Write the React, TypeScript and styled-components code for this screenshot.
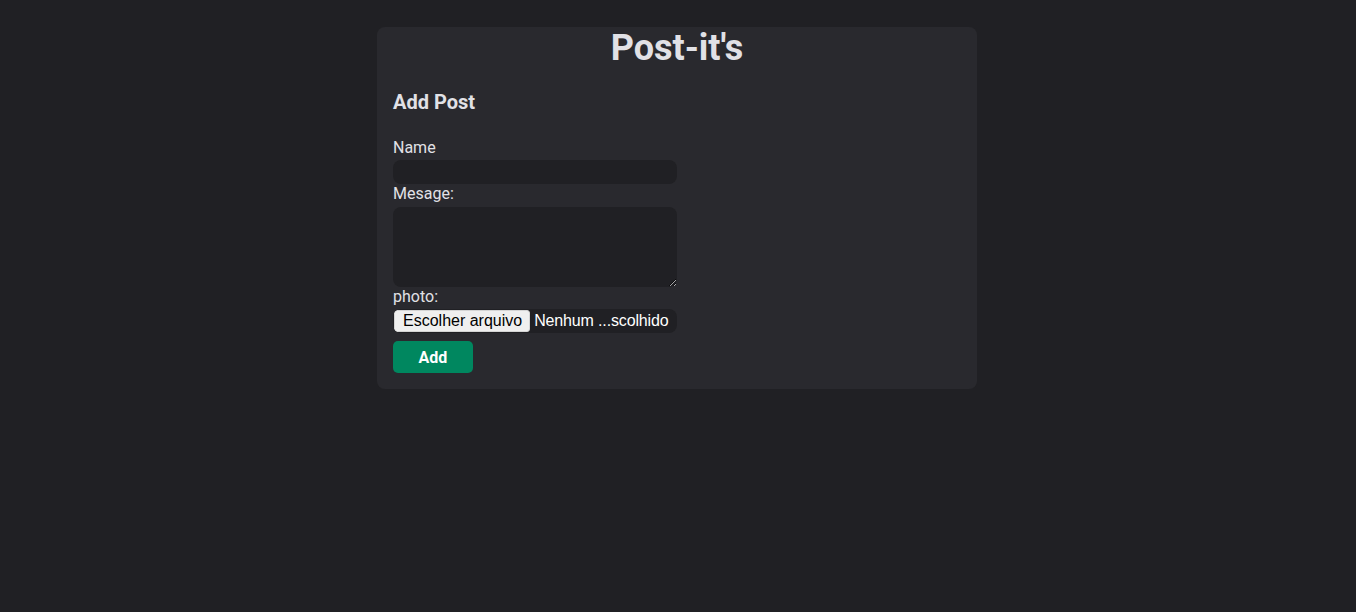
import React from "react";
import styled, { createGlobalStyle } from "styled-components";

const GlobalStyle = createGlobalStyle`
  html, body {
    margin: 0;
    padding: 0;
    background: #202024;
    min-height: 100%;
  }
  body {
    font-family: Roboto, "Liberation Sans", Arial, sans-serif;
    color: #e1e1e6;
  }
  * { box-sizing: border-box; }
`;

const Page = styled.main`
  min-height: 100vh;
  display: flex;
  justify-content: center;
  align-items: flex-start;
  padding: 27px 2px 0 0;
`;

const Card = styled.section`
  width: 600px;
  background: #29292e;
  border-radius: 8px;
  padding: 0 16px 16px;
`;

const Title = styled.h1`
  margin: 0;
  font-size: 36px;
  line-height: 42px;
  font-weight: 700;
  text-align: center;
  color: #e1e1e6;
`;

const SectionTitle = styled.h2`
  margin: 21px 0 23.5px;
  font-size: 20px;
  line-height: 24px;
  font-weight: 700;
  color: #e1e1e6;
`;

const Form = styled.form`
  display: flex;
  flex-direction: column;
  align-items: flex-start;
`;

const Field = styled.div`
  display: flex;
  flex-direction: column;
  width: 50%;
`;

const Label = styled.label`
  display: block;
  font-size: 16px;
  line-height: 18.5px;
  padding-top: 1px;
  margin-bottom: 3px;
  color: #e1e1e6;
`;

const TextInput = styled.input`
  width: 100%;
  height: 24px;
  border: none;
  outline: none;
  border-radius: 8px;
  background: #202024;
  color: #e1e1e6;
  padding: 0 8px;
  font: 16px Roboto, sans-serif;
`;

const TextArea = styled.textarea`
  width: 100%;
  height: 80px;
  border: none;
  outline: none;
  border-radius: 8px;
  background: #202024;
  color: #e1e1e6;
  padding: 4px 8px;
  font: 16px Roboto, sans-serif;
  display: block;
`;

const FilePicker = styled.label`
  width: 100%;
  height: 24px;
  display: flex;
  align-items: center;
  padding: 1px;
  border-radius: 8px;
  background: #202024;
  cursor: pointer;
  overflow: hidden;
  white-space: nowrap;
  font-family: "Liberation Sans", Arial, sans-serif;
  font-size: 16px;
  color: #ffffff;
`;

const HiddenInput = styled.input`
  display: none;
`;

const FileButton = styled.span`
  height: 22px;
  display: inline-flex;
  align-items: center;
  padding: 0 7px 0 8px;
  margin-right: 4px;
  background: #efefef;
  border: 1px solid #d4d4d4;
  border-radius: 3px;
  color: #000000;
`;

const FileName = styled.span`
  color: #ffffff;
  letter-spacing: -0.15px;
`;

const SubmitButton = styled.button`
  margin-top: 8px;
  width: 80px;
  height: 32px;
  border: none;
  border-radius: 5px;
  background: #00875f;
  color: #ffffff;
  font: 700 16px Roboto, sans-serif;
  cursor: pointer;
`;

export default function App() {
  return (
    <>
      <GlobalStyle />
      <Page>
        <Card>
          <Title>Post-it's</Title>
          <SectionTitle>Add Post</SectionTitle>
          <Form onSubmit={(e) => e.preventDefault()}>
            <Field>
              <Label htmlFor="name">Name</Label>
              <TextInput id="name" type="text" />
            </Field>
            <Field>
              <Label htmlFor="message">Mesage:</Label>
              <TextArea id="message" />
            </Field>
            <Field>
              <Label htmlFor="photo">photo:</Label>
              <FilePicker>
                <HiddenInput id="photo" type="file" />
                <FileButton>Escolher arquivo</FileButton>
                <FileName>Nenhum ...scolhido</FileName>
              </FilePicker>
            </Field>
            <SubmitButton type="submit">Add</SubmitButton>
          </Form>
        </Card>
      </Page>
    </>
  );
}
